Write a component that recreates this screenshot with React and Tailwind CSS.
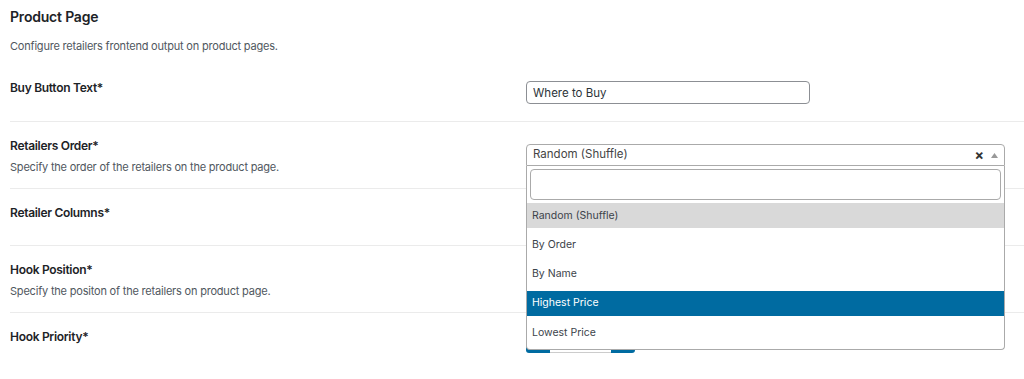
import { useState } from "react";

const options = [
  "Random (Shuffle)",
  "By Order",
  "By Name",
  "Highest Price",
  "Lowest Price",
];

const Row = ({ label, desc, height, children }) => (
  <div className={`flex border-b border-[#ebebeb] ${height}`}>
    <div className="w-[516px] shrink-0 pt-[15px]">
      <div className="text-[12px] leading-[18px] font-semibold tracking-[-0.3px] text-[#1d2327]">
        {label}
      </div>
      {desc && (
        <div className="mt-[3px] text-[11px] leading-[18px] tracking-[-0.2px] text-[#50575e]">
          {desc}
        </div>
      )}
    </div>
    <div className="flex-1">{children}</div>
  </div>
);

export default function App() {
  const [selected] = useState("Random (Shuffle)");
  const [hovered, setHovered] = useState("Highest Price");

  return (
    <div
      className="relative w-[1024px] h-[379px] overflow-hidden bg-white pl-[10px]"
      style={{ fontFamily: "Inter, 'Liberation Sans', sans-serif" }}
    >
      <div className="pt-[7px] pb-[9px]">
        <h2 className="text-[14px] leading-[20px] font-semibold tracking-[-0.2px] text-[#1d2327]">
          Product Page
        </h2>
        <p className="mt-[10px] text-[11px] leading-[18px] tracking-[-0.2px] text-[#50575e]">
          Configure retailers frontend output on product pages.
        </p>
      </div>

      <Row label="Buy Button Text*" height="h-[58px]">
        <input
          className="mt-[17px] w-[284px] h-[23px] rounded-[4px] border border-[#8c8f94] px-[6px] text-[11.5px] text-[#2c3338] outline-none"
          defaultValue="Where to Buy"
        />
      </Row>

      <Row
        label="Retailers Order*"
        desc="Specify the order of the retailers on the product page."
        height="h-[67px]"
      >
        <div className="relative mt-[22px] w-[479px]">
          <div className="flex h-[22px] items-center rounded-t-[4px] border border-[#aaa] bg-white pl-[6px] pr-[6px]">
            <span className="flex-1 text-[11.5px] text-[#444]">{selected}</span>
            <span className="mr-[7px] text-[14px] font-bold leading-none text-[#333]">
              ×
            </span>
            <svg width="7" height="5" viewBox="0 0 7 5">
              <path d="M0 5 L3.5 0 L7 5 Z" fill="#999" />
            </svg>
          </div>
          <div className="absolute left-0 top-[22px] z-20 h-[184px] w-[479px] rounded-b-[4px] border border-t-0 border-[#aaa] bg-white">
            <div className="px-[3px] pt-[3px]">
              <input className="h-[31px] w-full rounded-[4px] border border-[#aaa] outline-none" />
            </div>
            <ul className="mt-[3px] flex flex-col gap-[4.25px]">
              {options.map((o) => (
                <li
                  key={o}
                  onMouseEnter={() => setHovered(o)}
                  className={`flex h-[25px] items-center pl-[5px] text-[10.5px] ${
                    o === hovered
                      ? "bg-[#006ba1] text-white"
                      : o === selected
                      ? "bg-[#d9d9d9] text-[#3c434a]"
                      : "text-[#3c434a]"
                  }`}
                >
                  {o}
                </li>
              ))}
            </ul>
          </div>
        </div>
      </Row>

      <Row label="Retailer Columns*" height="h-[57px]" />

      <Row
        label="Hook Position*"
        desc="Specify the positon of the retailers on product page."
        height="h-[67px]"
      />

      <div className="flex">
        <div className="w-[516px] shrink-0 pt-[15px]">
          <div className="text-[12px] leading-[18px] font-semibold tracking-[-0.3px] text-[#1d2327]">
            Hook Priority*
          </div>
        </div>
        <div className="mt-[16px] flex h-[24px] w-[109px]">
          <div className="w-[24px] rounded-l-[3px] bg-[#006ba1]" />
          <div className="w-[61px] border-y border-[#ccc] bg-white" />
          <div className="w-[24px] rounded-r-[3px] bg-[#006ba1]" />
        </div>
      </div>
    </div>
  );
}
